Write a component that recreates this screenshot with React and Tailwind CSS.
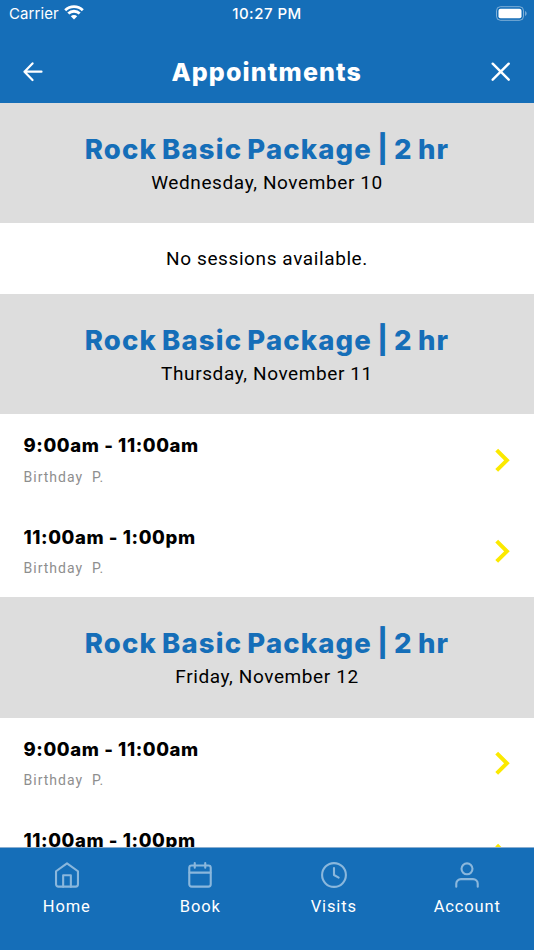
import React from 'react';

const BOOKINGS = [
    { date: 'Wednesday, November 10', sessions: [] },
    { date: 'Thursday, November 11', sessions: ['9:00am - 11:00am', '11:00am - 1:00pm'] },
    { date: 'Friday, November 12', sessions: ['9:00am - 11:00am', '11:00am - 1:00pm'] }
];

const TABS = [
    {
        label: 'Home',
        icon: (
            <>
                <path d="M2.6 8.8 12 2l9.4 6.8V20a2 2 0 0 1-2 2H4.6a2 2 0 0 1-2-2Z" />
                <path d="M8.7 22V12.2h6.6V22" />
            </>
        )
    },
    {
        label: 'Book',
        icon: (
            <>
                <rect x="2.8" y="3.8" width="18.4" height="18.2" rx="2" />
                <path d="M16.5 1.8v4M7.5 1.8v4M3 10h18" />
            </>
        )
    },
    {
        label: 'Visits',
        icon: (
            <>
                <circle cx="12" cy="12" r="10.2" />
                <path d="M12 6v6l4 2.2" />
            </>
        )
    },
    {
        label: 'Account',
        icon: (
            <>
                <path d="M2.8 22v-2.5a4 4 0 0 1 4-4h10.4a4 4 0 0 1 4 4V22" />
                <circle cx="12" cy="6.7" r="4.7" />
            </>
        )
    }
];

const StatusBar = () => (
    <div className="grid h-[28px] grid-cols-3 items-center pl-[9px] pr-[7px] font-[Inter,sans-serif] text-[15px] text-white">
        <div className="flex items-center gap-[5px]">
            <span className="tracking-[0.1px]">Carrier</span>
            <svg className="-mt-[3px] h-[15px] w-[20px]" viewBox="0 0 20 15" fill="none" stroke="currentColor" strokeWidth="2.8">
                <path d="M1.2 5.3a12.6 12.6 0 0 1 17.6 0" />
                <path d="M4.3 8.6a8.1 8.1 0 0 1 11.4 0" />
                <path d="M10 14.6 6.8 11.3a4.6 4.6 0 0 1 6.4 0Z" fill="currentColor" stroke="none" />
            </svg>
        </div>
        <span className="-ml-[2px] text-center font-medium tracking-[0.5px]">10:27 PM</span>
        <svg className="-mt-[2px] h-[15px] w-[32px] justify-self-end" viewBox="0 0 32 15">
            <rect x="1.5" y="0.7" width="27" height="13.6" rx="4" fill="none" stroke="white" strokeOpacity="0.45" />
            <rect x="3.5" y="2.7" width="23" height="9.6" rx="2" fill="white" />
            <path d="M30.2 5v5c1.8-.8 1.8-4.2 0-5Z" fill="white" fillOpacity="0.5" />
        </svg>
    </div>
);

const Header = () => (
    <header className="h-[103px] shrink-0 bg-[#156eb8] text-white">
        <StatusBar />
        <div className="flex h-[75px] items-center justify-between pl-[23px] pr-[23.5px] pt-[12px]">
            <svg className="h-[20px] w-[20px]" viewBox="0 0 20 20" fill="none" stroke="currentColor" strokeWidth="2.2" strokeLinecap="round" strokeLinejoin="round">
                <path d="M18.5 9.7H1.5M9.5 1.4 1.5 9.7l8 8.3" />
            </svg>
            <h1 className="font-[Inter,sans-serif] text-[25px] font-extrabold leading-[32px] tracking-[1.15px]">Appointments</h1>
            <svg className="h-[20px] w-[20px]" viewBox="0 0 20 20" fill="none" stroke="currentColor" strokeWidth="2.4" strokeLinecap="round">
                <path d="m1.7 1.7 16 16M17.7 1.7l-16 16" />
            </svg>
        </div>
    </header>
);

const SessionRow = ({ time }) => (
    <div className="flex h-[91.6px] items-center justify-between pl-[23.5px] pr-[24px]">
        <div>
            <div className="font-[Inter,sans-serif] text-[18.5px] font-extrabold leading-[24px] tracking-[0.6px]">{time}</div>
            <div className="mt-[9.5px] whitespace-pre text-[14px] leading-[20px] tracking-[1px] text-[#8e8e8e]">{'Birthday  P.'}</div>
        </div>
        <svg className="h-[24px] w-[15px]" viewBox="0 0 15 24" fill="none" stroke="#fbe900" strokeWidth="4">
            <path d="m1.7 2.2 10.2 10.1L1.7 22.4" />
        </svg>
    </div>
);

const Booking = ({ booking }) => (
    <section>
        <div className="h-[120.3px] bg-[#ddd] pt-[29px] text-center">
            <h2 className="font-[Inter,sans-serif] text-[27.5px] font-extrabold leading-[34px] tracking-[1.15px] text-[#156eb8] [word-spacing:-2px]">Rock Basic Package | 2 hr</h2>
            <p className="mt-[5px] text-[19px] leading-[24px] tracking-[0.6px]">{booking.date}</p>
        </div>
        {booking.sessions.length === 0 && (
            <div className="flex h-[70.5px] items-center justify-center pt-[2px] text-[19px] tracking-[0.6px]">No sessions available.</div>
        )}
        {booking.sessions.map((time) => (
            <SessionRow key={time} time={time} />
        ))}
    </section>
);

const TabBar = () => (
    <nav className="grid h-[103px] shrink-0 grid-cols-4 border-t border-[#8aaed0] bg-[#156eb8] text-white">
        {TABS.map((tab) => (
            <div key={tab.label} className="flex flex-col items-center pt-[13px]">
                <svg className="h-[28px] w-[28px] text-[#8ab7dc]" viewBox="0 0 24 24" fill="none" stroke="currentColor" strokeWidth="1.8" strokeLinecap="round" strokeLinejoin="round">
                    {tab.icon}
                </svg>
                <span className="mt-[7px] text-[16.5px] leading-[22px] tracking-[0.85px]">{tab.label}</span>
            </div>
        ))}
    </nav>
);

const App = () => {
    return (
        <div className="flex h-[950px] w-[534px] flex-col overflow-hidden bg-white font-[Roboto,sans-serif] text-black">
            <Header />
            <main className="min-h-0 flex-1 overflow-hidden">
                {BOOKINGS.map((booking) => (
                    <Booking key={booking.date} booking={booking} />
                ))}
            </main>
            <TabBar />
        </div>
    );
};

export default App;
